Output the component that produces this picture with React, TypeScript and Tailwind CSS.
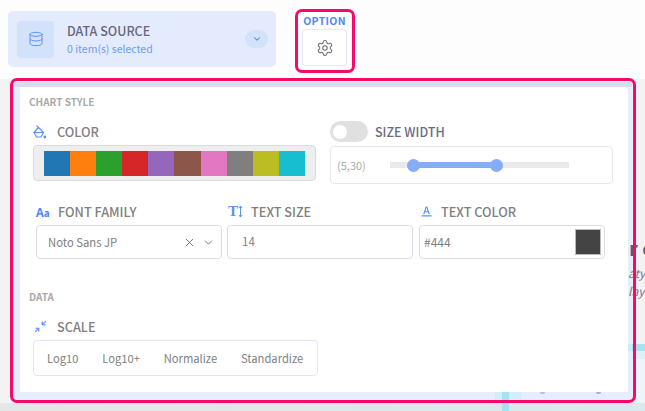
import { ChevronDown, Database, Settings, X } from "lucide-react";
import { AiOutlineFontColors } from "react-icons/ai";
import { BsArrowsAngleContract } from "react-icons/bs";

const swatches = [
  "bg-[#1f77b4]",
  "bg-[#ff7f0e]",
  "bg-[#2ca02c]",
  "bg-[#d62728]",
  "bg-[#9467bd]",
  "bg-[#8c564b]",
  "bg-[#e377c2]",
  "bg-[#7f7f7f]",
  "bg-[#bcbd22]",
  "bg-[#17becf]",
];

const scales = ["Log10", "Log10+", "Normalize", "Standardize"];

const labelClass = "text-[12.7px] leading-5 font-medium text-[#808080]";
const sectionClass = "text-[10px] leading-4 font-bold text-[#aaaaaa]";
const inputClass =
  "flex items-center w-[186px] h-[34px] rounded-[4px] border border-[#dcdce6] bg-white text-[11.5px] text-[#808080]";

const BucketIcon = () => (
  <svg width="14" height="14" viewBox="0 0 14 14" fill="none" stroke="#5b92f7" strokeWidth="1.2" strokeLinejoin="round">
    <path d="M1 7.5 L5.5 2.5 L10.5 7.5 L8 12 L3.5 12 Z" />
    <path d="M1 7.5 H10.5" />
    <path d="M3.5 0.8 L5.5 2.5" />
    <circle cx="11.8" cy="12" r="1.4" fill="#5b92f7" stroke="none" />
  </svg>
);

const UpDownIcon = () => (
  <svg width="5" height="13" viewBox="0 0 5 13" fill="none" stroke="#5b92f7" strokeWidth="1">
    <path d="M2.5 1 V12" />
    <path d="M0.8 3 L2.5 1 L4.2 3" />
    <path d="M0.8 10 L2.5 12 L4.2 10" />
  </svg>
);

const App = () => {
  return (
    <div
      className="relative w-[645px] h-[411px] overflow-hidden bg-[#f3f3f3]"
      style={{ fontFamily: '"Noto Sans CJK JP", "Noto Sans", sans-serif' }}
    >
      <div className="absolute left-[632px] top-[344px] w-[13px] h-[7px] bg-[#a3e4ee]" />
      <div className="absolute left-[632px] top-[351px] w-[13px] h-[8px] bg-[#dcf1f5]" />
      <div className="absolute left-[632px] top-[359px] w-[13px] h-[42px] bg-[#eef5f8]" />
      <div className="absolute left-0 top-[403px] w-[645px] h-[8px] bg-gradient-to-r from-[#e6e6e6] to-[#d8eaee]" />

      {/* top bar */}
      <header className="relative flex items-start h-[79px] bg-[#fdfdfd] pl-[8px] pt-[11px]">
        <div className="flex items-center w-[268px] h-[56px] rounded-[5px] bg-[#e4ebfc] pl-[9px] pr-[8px]">
          <div className="flex items-center justify-center w-[37px] h-[37px] rounded-[4px] bg-[#d3e1fb]">
            <Database size={16} strokeWidth={1.5} className="text-[#5b92f7]" />
          </div>
          <div className="ml-[13px] flex-1">
            <div className="text-[12.5px] leading-[18px] font-medium text-[#67677f]">DATA SOURCE</div>
            <div className="text-[10.5px] leading-[15px] text-[#6c9cf8] mt-[1px]">0 item(s) selected</div>
          </div>
          <div className="flex items-center justify-center w-[23px] h-[18px] rounded-full bg-[#d3e1fb]">
            <ChevronDown size={10} strokeWidth={2.5} className="text-[#4a7fe8]" />
          </div>
        </div>
        <div className="ml-[26px] w-[45px]">
          <div className="text-[10.5px] leading-[15px] font-bold text-[#4f8bf7] tracking-[0.3px] text-center mt-[2px]">OPTION</div>
          <div className="flex items-center justify-center w-[45px] h-[37px] mt-[1px] rounded-[3px] border border-[#e6e6f5] bg-white">
            <Settings size={18} strokeWidth={1.4} className="text-[#6e6e6e]" />
          </div>
        </div>
      </header>

      {/* option panel */}
      <section className="relative ml-[12px] w-[620px] h-[320px] mt-[3px] bg-[#e6edfc] border-t-[5px] border-[#d5deee] pl-[8px] pb-[10px]">
        <div className="w-[608px] h-[100%] rounded-tr-[4px] bg-white pt-[7px] pl-[9px]">
          <div className={sectionClass}>CHART STYLE</div>

          <div className="grid grid-cols-[283px_283px] gap-x-[14px] ml-[4px] mt-[11px]">
            <div>
              <div className="flex items-center h-[21px]">
                <BucketIcon />
                <span className={`${labelClass} ml-[10px]`}>COLOR</span>
              </div>
              <div className="flex items-center h-[36px] mt-[3px] rounded-[4px] border border-[#d9dce5] bg-[#eeeeee] pl-[10px]">
                {swatches.map((s) => (
                  <div key={s} className={`w-[26.1px] h-[25px] ${s}`} />
                ))}
              </div>
            </div>
            <div>
              <div className="flex items-center h-[21px]">
                <div className="flex items-center w-[38px] h-[21px] rounded-full bg-[#e0e0e0] pl-[3px]">
                  <div className="w-[14px] h-[14px] rounded-full bg-white" />
                </div>
                <span className="text-[12.5px] leading-5 font-medium text-[#6b6b85] ml-[7px]">SIZE WIDTH</span>
              </div>
              <div className="flex items-center h-[38px] mt-[4px] rounded-[4px] border border-[#e8e8e8] pl-[6px]">
                <span className="text-[11px] text-[#aaaaaa] w-[53px]">(5,30)</span>
                <div className="relative w-[179px] h-[6px] bg-[#eaeaea]">
                  <div className="absolute left-[24px] w-[83px] h-[6px] bg-[#86adfa]" />
                  <div className="absolute left-[17px] -top-[3px] w-[13px] h-[13px] rounded-full bg-[#86adfa]" />
                  <div className="absolute left-[100px] -top-[3px] w-[13px] h-[13px] rounded-full bg-[#86adfa]" />
                </div>
              </div>
            </div>
          </div>

          <div className="flex ml-[7px] mt-[17px]">
            <div>
              <div className="flex items-center h-[21px]">
                <span className="w-[15px] text-[#4a85f5] font-bold leading-none whitespace-nowrap text-[12px]">
                  A<span className="text-[10px]">a</span>
                </span>
                <span className={`${labelClass} ml-[7px]`}>FONT FAMILY</span>
              </div>
              <div className={`${inputClass} mt-[3px] pl-[11px] pr-[6px]`}>
                <span className="flex-1 text-[11.3px]">Noto Sans JP</span>
                <X size={13} strokeWidth={1.6} className="text-[#666666]" />
                <ChevronDown size={13} strokeWidth={1.6} className="text-[#666666] ml-[6px]" />
              </div>
            </div>
            <div className="ml-[5px]">
              <div className="flex items-center h-[21px] pl-[1px]">
                <span
                  className="text-[15px] leading-none font-bold text-[#5b92f7]"
                  style={{ fontFamily: '"Liberation Serif", serif' }}
                >
                  T
                </span>
                <UpDownIcon />
                <span className={`${labelClass} ml-[8px]`}>TEXT SIZE</span>
              </div>
              <div className={`${inputClass} mt-[3px] pl-[14px]`}>14</div>
            </div>
            <div className="ml-[6px]">
              <div className="flex items-center h-[21px] pl-[1px]">
                <AiOutlineFontColors size={13} className="text-[#5b92f7]" />
                <span className={`${labelClass} ml-[8px]`}>TEXT COLOR</span>
              </div>
              <div className={`${inputClass} mt-[3px] pl-[4px] pr-[3px] justify-between`}>
                <span className="text-[12px]">#444</span>
                <div className="w-[26px] h-[26px] bg-[#444444] border border-[#bbbbbb]" />
              </div>
            </div>
          </div>

          <div className={`${sectionClass} mt-[30px]`}>DATA</div>

          <div className="ml-[4px] mt-[11px]">
            <div className="flex items-center h-[21px]">
              <BsArrowsAngleContract size={11} className="text-[#5b92f7] ml-[2px] stroke-[0.8px]" />
              <span className={`${labelClass} ml-[11px]`}>SCALE</span>
            </div>
            <div className="flex items-center gap-x-[23.8px] w-[285px] h-[36px] mt-[3px] rounded-[4px] border border-[#e3e3fb] pl-[13px] text-[11.2px] text-[#808080]">
              {scales.map((s) => (
                <span key={s}>{s}</span>
              ))}
            </div>
          </div>
        </div>
      </section>

      <div className="absolute left-[629px] top-[236px] text-[20px] leading-6 font-bold text-[#5a5a7a] whitespace-nowrap">
        r e
      </div>
      <div className="absolute left-[628px] top-[264px] text-[12px] leading-[18px] italic text-[#77778a]">
        <div>aty</div>
        <div>lay</div>
      </div>
      <div className="absolute left-[495px] top-[392px] w-[27px] h-[11px] bg-[#d3edfb]" />
      <div className="absolute left-[502px] top-[392px] w-[7px] h-[19px] bg-[#a3e4ee]" />
      <div className="absolute left-[540px] top-[392px] w-[5px] h-[2px] rounded-b-full bg-[#b9b9ee]" />
      <div className="absolute left-[596px] top-[392px] w-[5px] h-[2px] rounded-b-full bg-[#a9a9ea]" />
      <div className="absolute left-[628px] top-[344px] w-[4px] h-[7px] bg-[#c5eef6]" />

      {/* highlight frames */}
      <div className="absolute left-[295px] top-[9px] w-[60px] h-[64px] rounded-[7px] border-[3px] border-[#f50a6b]" />
      <div className="absolute left-[10px] top-[78px] w-[626px] h-[325px] rounded-[7px] border-[3px] border-[#f50a6b]" />
    </div>
  );
};

export default App;
